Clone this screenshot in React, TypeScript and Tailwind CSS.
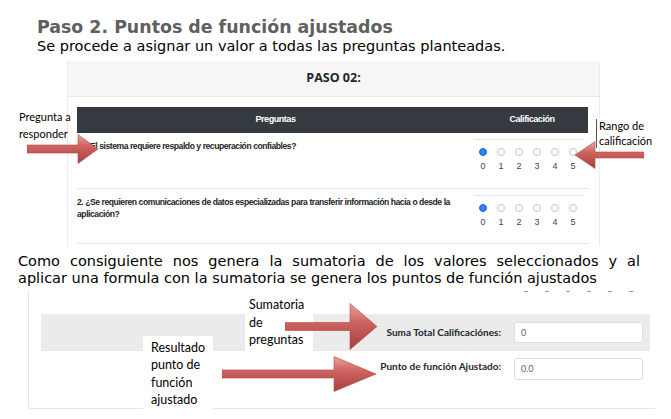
import React from "react";

type ArrowProps = { L: number; H: number; t: number; h: number; dir: "right" | "left"; id: string; className: string };

function Arrow({ L, H, t, h, dir, id, className }: ArrowProps) {
  const raw: [number, number][] = [
    [0, H / 2 - t / 2],
    [L - h, H / 2 - t / 2],
    [L - h, 0.5],
    [L, H / 2],
    [L - h, H - 0.5],
    [L - h, H / 2 + t / 2],
    [0, H / 2 + t / 2],
  ];
  const pts = raw.map(([x, y]) => `${dir === "right" ? x : L - x},${y}`).join(" ");
  return (
    <svg className={className} width={L} height={H} viewBox={`0 0 ${L} ${H}`}>
      <defs>
        <linearGradient id={id} x1="0" y1="0" x2="0" y2="1">
          <stop offset="0" stopColor="#e7a3a1" />
          <stop offset="0.4" stopColor="#cf6461" />
          <stop offset="1" stopColor="#a53f3c" />
        </linearGradient>
      </defs>
      <polygon points={pts} fill={`url(#${id})`} stroke="#b34c49" strokeWidth="0.6" />
    </svg>
  );
}

function Radios() {
  return (
    <div className="mt-[6px] w-[110px] border-t border-[#e6e6e6] pt-[8px]">
      <div className="flex">
        {[0, 1, 2, 3, 4, 5].map((n) => (
          <div key={n} className="w-[18px] flex justify-center">
            {n === 0 ? (
              <div className="w-[8px] h-[8px] rounded-full bg-[#2f80ed] border border-[#1f6fe0]" />
            ) : (
              <div className="w-[8px] h-[8px] rounded-full bg-white border border-[#c4c4c4]" />
            )}
          </div>
        ))}
      </div>
      <div className="flex mt-[5px]">
        {[0, 1, 2, 3, 4, 5].map((n) => (
          <div key={n} className="w-[18px] text-center text-[9px] leading-[10px] text-[#444] font-['Liberation_Sans',sans-serif]">
            {n}
          </div>
        ))}
      </div>
    </div>
  );
}

export default function App() {
  const narrow = "font-['Liberation_Sans',sans-serif] tracking-[-0.45px]";
  const doc = "font-['DejaVu_Sans','Verdana',sans-serif]";
  const label = "font-['Lato','Open_Sans',sans-serif]";
  return (
    <div className="relative w-[671px] h-[419px] overflow-hidden bg-white">
      {/* Title */}
      <div className={`${doc} pl-[37px] pt-[17px]`}>
        <div className="text-[17.4px] leading-[20px] font-bold text-[#5f5f5f]">Paso 2. Puntos de función ajustados</div>
        <div className="text-[14.5px] leading-[18px] text-black">Se procede a asignar un valor a todas las preguntas planteadas.</div>
      </div>

      {/* Image 1 */}
      <div className="ml-[67px] mt-[6px] w-[533px] h-[185px] border-l border-r border-[#ececec] bg-white">
        <div className="h-[36px] bg-[#f7f7f7] border-b border-[#e8e8e8] flex items-center justify-center">
          <span className="font-['Open_Sans',sans-serif] font-bold text-[12.5px] text-[#212529]">PASO 02:</span>
        </div>
        <div className="pl-[9px] pt-[10px]">
          <div className="w-[511px]">
            <div className={`${narrow} grid grid-cols-[397px_114px] h-[26px] bg-[#343a40] text-white font-bold text-[9px] items-center`}>
              <div className="text-center">Preguntas</div>
              <div className="text-center pl-[2px]">Calificación</div>
            </div>
            <div className="grid grid-cols-[397px_114px] h-[56px] border-b border-[#e3e3e3]">
              <div className={`${narrow} pt-[7px] text-[8.6px] leading-[12px] font-bold text-[#212529]`}>
                1. ¿El sistema requiere respaldo y recuperación confiables?
              </div>
              <div>
                <Radios />
              </div>
            </div>
            <div className="grid grid-cols-[397px_114px] h-[55px] border-b border-[#e3e3e3]">
              <div className={`${narrow} pt-[7px] text-[8.6px] leading-[12px] font-bold text-[#212529] whitespace-nowrap`}>
                2. ¿Se requieren comunicaciones de datos especializadas para transferir información hacia o desde la
                <br />
                aplicación?
              </div>
              <div>
                <Radios />
              </div>
            </div>
          </div>
        </div>
      </div>

      {/* Paragraph */}
      <div className={`${doc} ml-[18px] mt-[7px] w-[622px] text-[14.5px] leading-[16.5px] text-black`}>
        <div className="text-justify [text-align-last:justify]">
          Como consiguiente nos genera la sumatoria de los valores seleccionados y al
        </div>
        <div>aplicar una formula con la sumatoria se genera los puntos de función ajustados</div>
      </div>

      {/* Image 2 */}
      <div className="relative ml-[28px] mt-[4px] w-[627px] h-[119px] border-l border-b border-[#e6e6e6] rounded-bl-[3px]">
        <div className="flex gap-[17px] ml-[495px] pt-[1px]">
          {[0, 1, 2, 3, 4, 5].map((n) => (
            <div key={n} className="w-[4px] h-[1px] bg-[#9a9a9a]" />
          ))}
        </div>
        <div className="ml-[12px] mt-[22px] w-[609px]">
          <div className="h-[37px] bg-[#ebebeb] flex items-center">
            <div className="w-[460px] text-right text-[10px] font-bold text-[#212529] font-['Lato',sans-serif]">Suma Total Calificaciónes:</div>
            <div className="ml-[13px] w-[129px] h-[21px] bg-white border border-[#dedede] rounded-[3px] flex items-center pl-[6px] text-[9px] text-[#666] font-['Lato',sans-serif]">
              0
            </div>
          </div>
          <div className="h-[37px] flex items-start pt-[7px]">
            <div className="w-[460px] text-right text-[10px] font-bold text-[#212529] font-['Lato',sans-serif] pt-[1px]">Punto de función Ajustado:</div>
            <div className="ml-[13px] w-[129px] h-[22px] bg-white border border-[#dedede] rounded-[3px] flex items-center pl-[6px] text-[9px] text-[#666] font-['Lato',sans-serif]">
              0.0
            </div>
          </div>
        </div>
      </div>

      {/* Overlay labels */}
      <div className={`${label} absolute left-[19px] top-[108px] text-[11px] leading-[17px] text-black`}>
        Pregunta a
        <br />
        responder
      </div>
      <div className={`${label} absolute left-[596px] top-[119px] border-l border-[#555] pl-[2px] text-[11px] leading-[14.5px] text-black bg-white`}>
        Rango de
        <br />
        calificación
      </div>
      <div className={`${label} absolute left-[245px] top-[296px] w-[68px] h-[55px] bg-white pl-[4px] text-[12.5px] leading-[17.5px] text-black`}>
        Sumatoria
        <br />
        de
        <br />
        preguntas
      </div>
      <div className={`${label} absolute left-[143px] top-[336px] w-[70px] h-[74px] bg-white pl-[8px] pt-[3px] text-[12.5px] leading-[17.3px] text-black`}>
        Resultado
        <br />
        punto de
        <br />
        función
        <br />
        ajustado
      </div>

      {/* Arrows */}
      <Arrow id="a1" className="absolute left-[27px] top-[134px]" L={71} H={30} t={8} h={20} dir="right" />
      <Arrow id="a2" className="absolute left-[575px] top-[141px]" L={69} H={28} t={6} h={20} dir="left" />
      <Arrow id="a3" className="absolute left-[285px] top-[303px]" L={92} H={47} t={8} h={27} dir="right" />
      <Arrow id="a4" className="absolute left-[222px] top-[356px]" L={154} H={36} t={8} h={42} dir="right" />
    </div>
  );
}
